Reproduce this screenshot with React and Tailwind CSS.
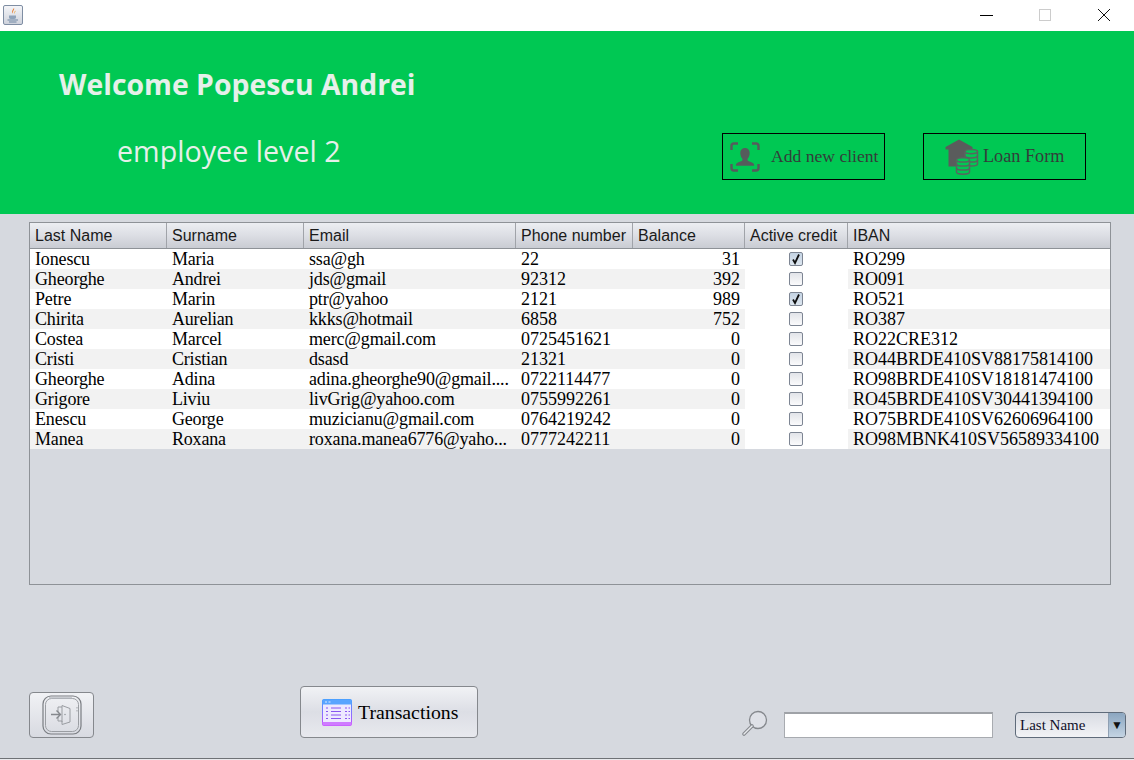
import React from "react";

const rows = [
  ["Ionescu", "Maria", "ssa@gh", "22", "31", true, "RO299"],
  ["Gheorghe", "Andrei", "jds@gmail", "92312", "392", false, "RO091"],
  ["Petre", "Marin", "ptr@yahoo", "2121", "989", true, "RO521"],
  ["Chirita", "Aurelian", "kkks@hotmail", "6858", "752", false, "RO387"],
  ["Costea", "Marcel", "merc@gmail.com", "0725451621", "0", false, "RO22CRE312"],
  ["Cristi", "Cristian", "dsasd", "21321", "0", false, "RO44BRDE410SV88175814100"],
  ["Gheorghe", "Adina", "adina.gheorghe90@gmail....", "0722114477", "0", false, "RO98BRDE410SV18181474100"],
  ["Grigore", "Liviu", "livGrig@yahoo.com", "0755992261", "0", false, "RO45BRDE410SV30441394100"],
  ["Enescu", "George", "muzicianu@gmail.com", "0764219242", "0", false, "RO75BRDE410SV62606964100"],
  ["Manea", "Roxana", "roxana.manea6776@yaho...", "0777242211", "0", false, "RO98MBNK410SV56589334100"],
];

const headers = [
  ["Last Name", "w-[137px]"],
  ["Surname", "w-[137px]"],
  ["Email", "w-[212px]"],
  ["Phone number", "w-[117px]"],
  ["Balance", "w-[112px]"],
  ["Active credit", "w-[103px]"],
  ["IBAN", "flex-1"],
];

function JavaIcon() {
  return (
    <div className="w-[20px] h-[20px] rounded-[2px] border border-[#7f8ea3] bg-gradient-to-b from-[#f4f5f8] to-[#cfd3dc] flex items-center justify-center">
      <svg width="14" height="16" viewBox="0 0 14 16" fill="none">
        <path d="M8 1C9 3 6 4 7 6.5C5 5 6.5 3 8 1Z" fill="#e8803a" />
        <path d="M9.5 3.5C10 5 8 5.5 8.5 7C7.6 6 8.5 4.5 9.5 3.5Z" fill="#e8a03a" />
        <path d="M3 8.5H10V10.5C10 11.5 9 12 6.5 12C4 12 3 11.5 3 10.5Z" fill="#8fa3ba" />
        <path d="M1.5 13H12M3 15H10.5" stroke="#6f87a3" strokeWidth="1" />
      </svg>
    </div>
  );
}

function FaceIcon() {
  return (
    <svg width="30" height="30" viewBox="0 0 30 30" fill="none">
      <path d="M1.5 8V4C1.5 2.5 2.5 1.5 4 1.5H8M22 1.5H26C27.5 1.5 28.5 2.5 28.5 4V8M28.5 22V26C28.5 27.5 27.5 28.5 26 28.5H22M8 28.5H4C2.5 28.5 1.5 27.5 1.5 26V22" stroke="#555c5c" strokeWidth="2.4" />
      <path d="M15 6C18 6 19.7 8.3 19.7 11C19.7 13.5 18.8 15.5 17.6 16.7V18.2C17.6 19.2 22 20 23.5 21.5C24 22 24.2 23 24.2 23.8H5.8C5.8 23 6 22 6.5 21.5C8 20 12.4 19.2 12.4 18.2V16.7C11.2 15.5 10.3 13.5 10.3 11C10.3 8.3 12 6 15 6Z" fill="#555c5c" />
    </svg>
  );
}

function LoanIcon() {
  return (
    <svg className="shrink-0" width="34" height="36" viewBox="0 0 34 36" fill="none">
      <path d="M14 0.5L27.5 8V10.5H25V13H21V19H15V26H11V27.5H3.5V10.5H0.5V8Z" fill="#5a5c5c" />
      <g stroke="#5a6460" strokeWidth="1.5">
        <path d="M20 12.5C20 11 23 10.5 26 10.5C29.5 10.5 32.5 11 32.5 12.5V25C32.5 26.3 29.5 27 26 27C23 27 20 26.3 20 25Z" fill="#00c853" />
        <path d="M20 12.5C20 14 23 14.7 26 14.7C29.5 14.7 32.5 14 32.5 12.5M20 16.8C20 18.2 23 18.9 26 18.9C29.5 18.9 32.5 18.2 32.5 16.8M20 21C20 22.4 23 23.1 26 23.1C29.5 23.1 32.5 22.4 32.5 21" />
        <path d="M11.5 21C11.5 19.5 14.5 18.8 18 18.8C21.5 18.8 24.5 19.5 24.5 21V33C24.5 34.4 21.5 35.2 18 35.2C14.5 35.2 11.5 34.4 11.5 33Z" fill="#00c853" />
        <path d="M11.5 21C11.5 22.4 14.5 23.1 18 23.1C21.5 23.1 24.5 22.4 24.5 21M11.5 25C11.5 26.4 14.5 27.1 18 27.1C21.5 27.1 24.5 26.4 24.5 25M11.5 29C11.5 30.4 14.5 31.1 18 31.1C21.5 31.1 24.5 30.4 24.5 29" />
      </g>
    </svg>
  );
}

function ExitIcon() {
  return (
    <svg width="40" height="40" viewBox="0 0 40 40" fill="none">
      <rect x="1" y="1" width="38" height="38" rx="8" stroke="#7a7d82" strokeWidth="1.2" />
      <rect x="3.5" y="3.5" width="33" height="33" rx="6" stroke="#9a9da2" strokeWidth="1" />
      <path d="M7 3H30" stroke="#b8bbc0" strokeWidth="1.4" />
      <path d="M35 12V18" stroke="#a0a3a8" strokeWidth="1" strokeDasharray="1.5 1.5" />
      <path d="M20 12V10.5L28 13.5V27L20 29.5V26H16V22M16 17V12H20M20 12V27" stroke="#9a9da2" strokeWidth="1" />
      <path d="M9 19.5H18M14.5 15.5L18.5 19.5L14.5 23.5" stroke="#85888d" strokeWidth="1.4" />
      <circle cx="23" cy="19.5" r="0.7" fill="#85888d" />
    </svg>
  );
}

function TableIcon() {
  return (
    <svg className="shrink-0" width="30" height="27" viewBox="0 0 30 27" fill="none">
      <defs>
        <linearGradient id="tg" x1="0" y1="0" x2="0" y2="1">
          <stop offset="0" stopColor="#3f9bff" />
          <stop offset="1" stopColor="#c44bff" />
        </linearGradient>
      </defs>
      <rect x="0.5" y="0.5" width="29" height="26" rx="1.5" fill="#eee9ff" stroke="url(#tg)" />
      <rect x="0.5" y="0.5" width="29" height="5" fill="#5aa5ff" />
      <rect x="0.5" y="23" width="29" height="3.5" fill="#cf7bff" />
      <path d="M3 3H5M6.5 3H8.5" stroke="#dcebff" strokeWidth="1" />
      <path d="M4 9H6M9 9H19M23 9H25M26.5 9H28M4 12.5H6M9 12.5H19M23 12.5H25M26.5 12.5H28M4 16H6M9 16H19M23 16H25M26.5 16H28M4 19.5H6M9 19.5H19M23 19.5H25M26.5 19.5H28" stroke="#8a55f0" strokeWidth="1" />
    </svg>
  );
}

function SearchIcon() {
  return (
    <svg width="28" height="28" viewBox="0 0 28 28" fill="none">
      <circle cx="17" cy="10" r="8.5" fill="#dfe1e7" stroke="#85888d" strokeWidth="1.3" />
      <path d="M11 16L3 24" stroke="#85888d" strokeWidth="3.6" strokeLinecap="round" />
      <path d="M11 16L3 24" stroke="#e8eaee" strokeWidth="1.4" strokeLinecap="round" />
    </svg>
  );
}

function Check({ on }) {
  return (
    <div className={"w-[14px] h-[14px] rounded-[2px] border border-[#7d8593] flex items-center justify-center " + (on ? "bg-gradient-to-b from-[#c4d3e3] to-[#dde6ef]" : "bg-gradient-to-b from-[#e2e4e9] to-[#fbfbfc]")}>
      {on && (
        <svg width="12" height="12" viewBox="0 0 12 12" fill="none">
          <path d="M3 6.5L5 10L9 1.5" stroke="#111" strokeWidth="1.8" />
        </svg>
      )}
    </div>
  );
}

export default function App() {
  return (
    <div className="w-[1134px] h-[760px] overflow-hidden flex flex-col bg-white font-['Liberation_Serif',serif]">
      <div className="h-[31px] shrink-0 flex items-start bg-white">
        <div className="ml-[3px] mt-[5px]"><JavaIcon /></div>
        <div className="ml-auto flex items-center h-[30px]">
          <div className="w-[13px] h-px bg-black mr-[46px]" />
          <div className="w-[12px] h-[12px] border border-[#cccccc] mr-[46px]" />
          <svg className="mr-[23px]" width="14" height="14" viewBox="0 0 14 14" fill="none">
            <path d="M1 1L13 13M13 1L1 13" stroke="#111" strokeWidth="1" />
          </svg>
        </div>
      </div>

      <div className="h-[183px] shrink-0 bg-[#00c853] flex justify-between">
        <div className="pl-[59px] pt-[33px] font-['Open_Sans',sans-serif] text-[#e6f0ea]">
          <div className="text-[28.4px] leading-[40px] font-bold whitespace-nowrap">Welcome Popescu Andrei</div>
          <div className="ml-[58px] mt-[27px] text-[28.7px] leading-[40px] font-normal whitespace-nowrap">employee level 2</div>
        </div>
        <div className="flex gap-[38px] pr-[48px] pt-[102px]">
          <div className="w-[163px] h-[47px] border border-black flex items-center pl-[7px] text-[#333d3a]">
            <FaceIcon />
            <span className="ml-[11px] text-[17.6px] leading-none whitespace-nowrap">Add new client</span>
          </div>
          <div className="w-[163px] h-[47px] border border-black flex items-center pl-[21px] text-[#333d3a]">
            <LoanIcon />
            <span className="ml-[4px] text-[18.2px] leading-none whitespace-nowrap">Loan Form</span>
          </div>
        </div>
      </div>

      <div className="flex-1 bg-[#d6d9df] border-b border-[#6f7276] flex flex-col pl-[29px]">
        <div className="mt-[8px] w-[1082px] h-[363px] border border-[#8e9297] flex flex-col">
          <div className="h-[26px] shrink-0 flex border-b border-[#8e9297] bg-gradient-to-b from-[#eceef2] via-[#dcdee4] to-[#c9ccd3] font-['Liberation_Sans',sans-serif] text-[16px] text-[#1a1a1a]">
            {headers.map(([h, w], i) => (
              <div key={h} className={w + " h-full flex items-center pl-[5px] " + (i < 6 ? "border-r border-[#a0a3a9]" : "")}>{h}</div>
            ))}
          </div>
          {rows.map((r, i) => (
            <div key={i} className={"h-[20px] flex text-[18px] leading-[20px] text-black whitespace-nowrap " + (i % 2 ? "bg-[#f2f2f2]" : "bg-white")}>
              <div className="w-[137px] pl-[5px] tracking-[-0.15px]">{r[0]}</div>
              <div className="w-[137px] pl-[5px] tracking-[-0.2px]">{r[1]}</div>
              <div className="w-[212px] pl-[5px] tracking-[-0.15px]">{r[2]}</div>
              <div className="w-[117px] pl-[5px]">{r[3]}</div>
              <div className="w-[112px] pr-[5px] text-right">{r[4]}</div>
              <div className="w-[103px] pr-[1px] bg-white flex items-center justify-center"><Check on={r[5]} /></div>
              <div className="flex-1 pl-[5px]">{r[6]}</div>
            </div>
          ))}
        </div>

        <div className="mt-auto mb-[20px] flex items-end">
          <div className="w-[65px] h-[46px] shrink-0 rounded-[4px] border border-[#85888d] bg-gradient-to-b from-[#f1f2f5] to-[#d8dae1] flex items-center justify-center">
            <ExitIcon />
          </div>
          <div className="ml-[206px] w-[178px] h-[52px] shrink-0 rounded-[4px] border border-[#85888d] bg-gradient-to-b from-[#f1f2f5] via-[#dcdee5] to-[#e8e9ee] flex items-center pl-[21px]">
            <TableIcon />
            <span className="ml-[6px] mt-[2px] text-[19.8px] text-black whitespace-nowrap">Transactions</span>
          </div>
          <div className="ml-[263px] shrink-0"><SearchIcon /></div>
          <div className="ml-[15px] w-[209px] h-[26px] shrink-0 bg-white border border-[#a8abb0] border-t-2 border-t-[#9fa2a7]" />
          <div className="ml-[22px] w-[111px] h-[26px] shrink-0 rounded-[4px] border border-[#5f6b7a] bg-gradient-to-b from-[#d9dce3] to-[#f2f3f6] flex items-center text-[15px] text-[#10102a] overflow-hidden">
            <span className="pl-[4px] flex-1 whitespace-nowrap">Last Name</span>
            <div className="w-[17px] h-full bg-gradient-to-b from-[#8ba6c0] to-[#c4d4e3] flex items-center justify-center border-l border-[#8fa0b3] text-[#111] text-[12px]">▼</div>
          </div>
        </div>
      </div>
      <div className="h-px shrink-0 bg-[#e8e9ec]" />
    </div>
  );
}
